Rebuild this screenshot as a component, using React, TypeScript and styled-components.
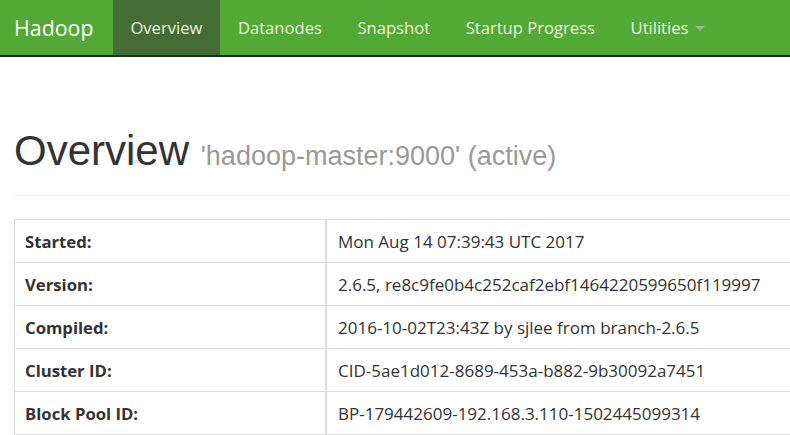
import React from "react";
import styled, { createGlobalStyle } from "styled-components";

const Global = createGlobalStyle`
  html, body { margin: 0; padding: 0; background: #fff; overflow: hidden; }
  body { font-family: "Open Sans", "Noto Sans", sans-serif; color: #333; }
`;

const Navbar = styled.nav`
  display: flex;
  align-items: stretch;
  height: 55px;
  background: #53a936;
  border-bottom: 2px solid #1e2a18;
`;

const Brand = styled.a`
  display: flex;
  align-items: center;
  padding: 0 19px 0 14px;
  font-size: 21.4px;
  color: #fff;
  text-decoration: none;
`;

const NavItem = styled.a<{ $active?: boolean }>`
  display: flex;
  align-items: center;
  gap: 7px;
  padding: 0 17.8px;
  font-size: 16.6px;
  color: #eaf6df;
  text-decoration: none;
  background: ${(p) => (p.$active ? "#446c34" : "transparent")};
`;

const Caret = styled.span`
  width: 0;
  height: 0;
  border-left: 5px solid transparent;
  border-right: 5px solid transparent;
  border-top: 5px solid #9fb894;
  margin-top: 2px;
`;

const Container = styled.div`
  width: 1000px;
  padding: 0 14px;
`;

const PageHeader = styled.div`
  margin-top: 71px;
  padding-bottom: 21px;
  border-bottom: 1px solid #eee;
  margin-bottom: 23px;
`;

const Title = styled.h1`
  margin: 0;
  font-family: "Liberation Sans", Arial, sans-serif;
  font-weight: 400;
  font-size: 42px;
  line-height: 1.1;
  color: #333;
`;

const Small = styled.small`
  font-size: 27px;
  color: #999;
`;

const Table = styled.table`
  width: 100%;
  border-collapse: collapse;
  border: 1px solid #ddd;
  font-size: 17px;
`;

const Row = styled.tr``;

const Th = styled.th`
  width: 290px;
  text-align: left;
  font-weight: 700;
  font-size: 16.7px;
  padding: 0 10px;
  height: 42px;
  border: 1px solid #ddd;
  border-right-width: 2px;
`;

const Td = styled.td`
  padding: 0 11px;
  height: 42px;
  border: 1px solid #ddd;
`;

const rows: [string, string][] = [
  ["Started:", "Mon Aug 14 07:39:43 UTC 2017"],
  ["Version:", "2.6.5, re8c9fe0b4c252caf2ebf1464220599650f119997"],
  ["Compiled:", "2016-10-02T23:43Z by sjlee from branch-2.6.5"],
  ["Cluster ID:", "CID-5ae1d012-8689-453a-b882-9b30092a7451"],
  ["Block Pool ID:", "BP-179442609-192.168.3.110-1502445099314"],
];

export default function App() {
  return (
    <>
      <Global />
      <Navbar>
        <Brand>Hadoop</Brand>
        <NavItem $active>Overview</NavItem>
        <NavItem>Datanodes</NavItem>
        <NavItem>Snapshot</NavItem>
        <NavItem>Startup Progress</NavItem>
        <NavItem>
          Utilities <Caret />
        </NavItem>
      </Navbar>
      <Container>
        <PageHeader>
          <Title>
            Overview <Small>'hadoop-master:9000' (active)</Small>
          </Title>
        </PageHeader>
        <Table>
          <tbody>
            {rows.map(([k, v]) => (
              <Row key={k}>
                <Th>{k}</Th>
                <Td>{v}</Td>
              </Row>
            ))}
          </tbody>
        </Table>
      </Container>
    </>
  );
}
